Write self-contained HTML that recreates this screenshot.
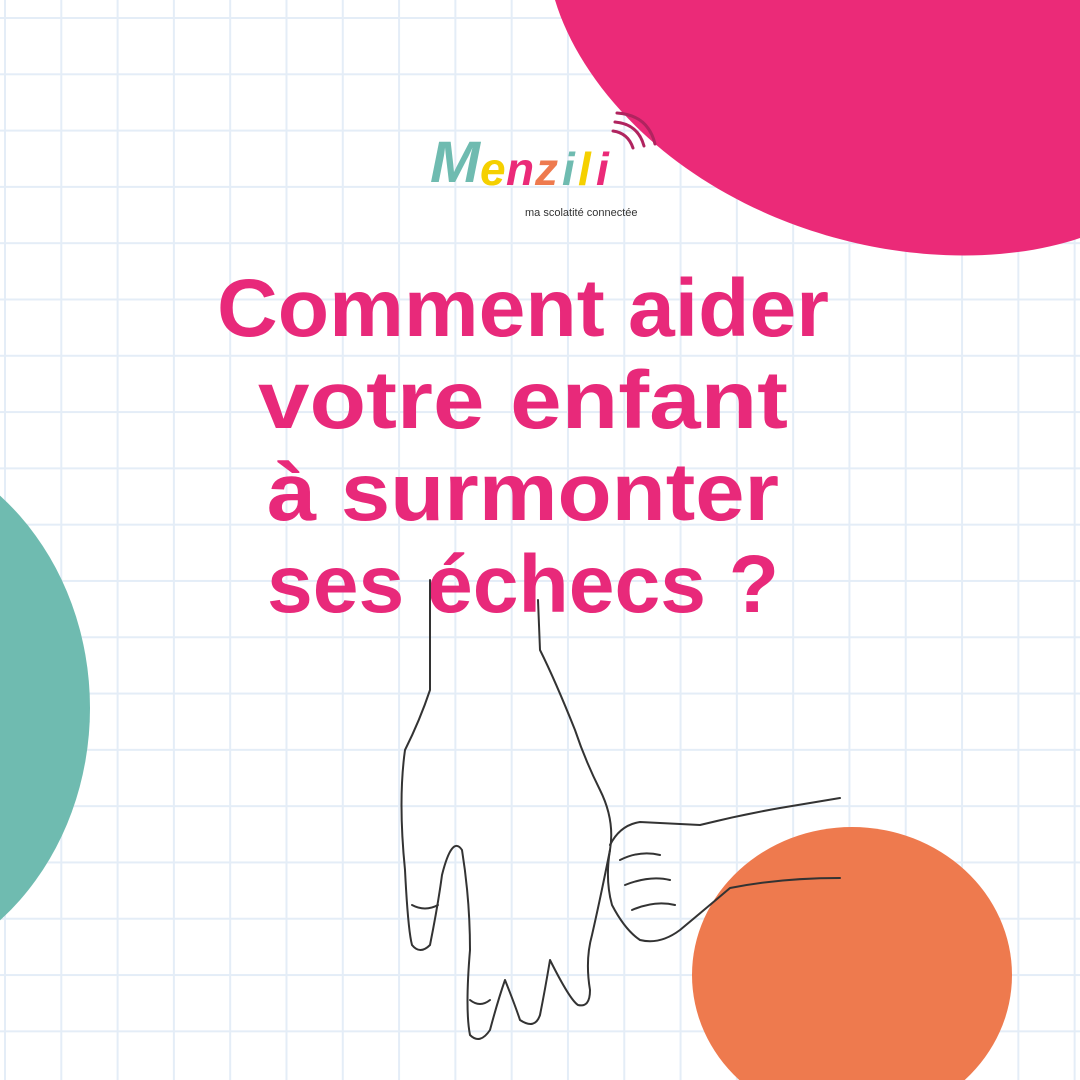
<!DOCTYPE html>
<html><head><meta charset="utf-8"><style>
html,body{margin:0;padding:0}
body{width:1080px;height:1080px;overflow:hidden;position:relative;background:#fff;
background-image:linear-gradient(to right,#e4edf7 2px,transparent 2px),linear-gradient(to bottom,#e4edf7 2px,transparent 2px);
background-size:56.3px 56.3px;background-position:4px 17px;}
svg{position:absolute;left:0;top:0}
</style></head><body>
<svg width="1080" height="1080" viewBox="0 0 1080 1080">
<path d="M555 0 C585 100 700 215 880 248 C960 262 1030 255 1080 238 L1080 0 Z" fill="#eb2a78"/>
<ellipse cx="-150" cy="708" rx="240" ry="272" fill="#6fbbb0"/>
<ellipse cx="852" cy="975" rx="160" ry="148" fill="#ee7a4e"/>
<g font-family="Liberation Sans, sans-serif" font-weight="bold">
<text x="430" y="182" font-size="58" font-style="italic" fill="#6fbbb0" textLength="50" lengthAdjust="spacingAndGlyphs">M</text>
<text x="480" y="185" font-size="46" font-style="italic" fill="#f5d000">e</text>
<text x="506" y="185" font-size="46" font-style="italic" fill="#eb2a78">n</text>
<text x="535" y="185" font-size="46" font-style="italic" fill="#ee7a4e">z</text>
<text x="562" y="185" font-size="46" font-style="italic" fill="#6fbbb0">i</text>
<text x="578" y="185" font-size="46" font-style="italic" fill="#f5d000">l</text>
<text x="596" y="185" font-size="46" font-style="italic" fill="#eb2a78">i</text>
<text x="525" y="216" font-size="11" font-weight="normal" fill="#333">ma scolatité connectée</text>
</g>
<g fill="none" stroke="#b0245f" stroke-width="3" stroke-linecap="round">
<path d="M613 131 Q628 133 633 148"/><path d="M615 122 Q638 124 644 146"/><path d="M617 113 Q648 115 655 144"/>
</g>
<g font-family="Liberation Sans, sans-serif" font-weight="bold" font-size="82" fill="#e8297a" text-anchor="middle">
<text x="523" y="336" textLength="612" lengthAdjust="spacingAndGlyphs">Comment aider</text>
<text x="523" y="428" textLength="530" lengthAdjust="spacingAndGlyphs">votre enfant</text>
<text x="523" y="520" textLength="512" lengthAdjust="spacingAndGlyphs">à surmonter</text>
<text x="523" y="612" textLength="512" lengthAdjust="spacingAndGlyphs">ses échecs ?</text>
</g>
<g fill="none" stroke="#333" stroke-width="2" stroke-linecap="round" stroke-linejoin="round">
<path d="M430 580 L430 690 Q420 720 405 750 Q398 800 405 870 Q408 930 412 945 Q420 955 430 945 Q438 905 442 875 Q452 835 462 850 Q470 900 470 950 Q465 1010 470 1035 Q480 1045 490 1030 Q498 1000 505 980 Q515 1005 520 1020 Q535 1030 540 1015 Q545 990 550 960 Q570 1000 578 1005 Q590 1008 590 990 Q585 960 592 935 Q600 900 610 850 Q615 820 600 790 Q585 760 575 730 Q555 680 540 650 L538 600"/>
<path d="M610 845 Q620 825 640 822 L700 825 Q740 815 780 808 L840 798"/>
<path d="M610 850 Q605 880 612 905 Q625 930 640 940 Q660 945 680 930 Q710 905 730 888 Q780 878 840 878"/>
<path d="M620 860 Q640 850 660 855 M625 885 Q650 875 670 880 M632 910 Q655 900 675 905"/>
<path d="M412 905 Q425 912 438 905 M470 1000 Q480 1008 490 1000"/>
</g>
</svg>
</body></html>
